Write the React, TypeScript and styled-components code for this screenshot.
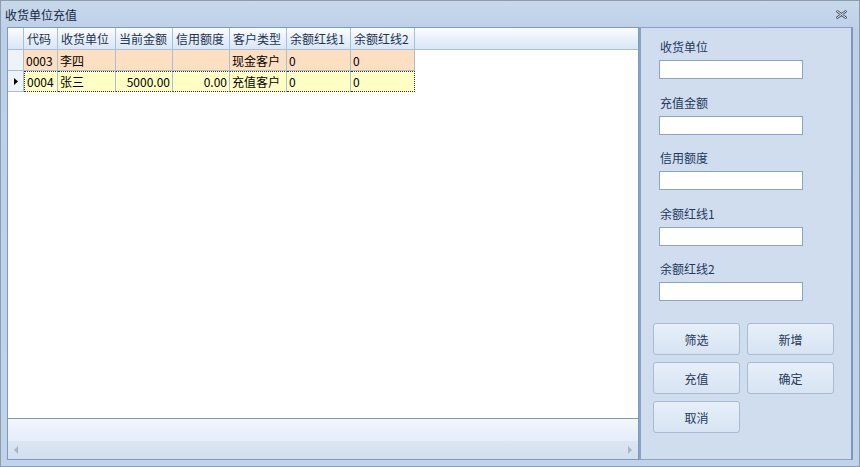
import React from "react";
import styled, { createGlobalStyle } from "styled-components";

const Global = createGlobalStyle`
  html, body { margin: 0; padding: 0; }
  body { font-family: "Noto Sans CJK SC", "Liberation Sans", sans-serif; font-size: 12px; }
`;

const Window = styled.div`
  width: 860px;
  height: 467px;
  box-sizing: border-box;
  border: 1px solid #8e9cb0;
  background: linear-gradient(#c9d9ec, #bcd0e8 30px, #c0d3ea);
  display: flex;
  flex-direction: column;
`;

const TitleBar = styled.div`
  height: 26px;
  display: flex;
  align-items: center;
  justify-content: space-between;
  padding: 0 12px 0 4px;
  color: #15283f;
  font-size: 12px;
`;

const Body = styled.div`
  flex: 1;
  display: flex;
  padding: 0 6px 6px 6px;
  min-height: 0;
`;

const GridBox = styled.div`
  width: 632px;
  box-sizing: border-box;
  border: 1px solid #7f98bb;
  background: #fff;
  display: flex;
  flex-direction: column;
`;

const Table = styled.div`
  flex: 1;
  display: grid;
  grid-template-columns: 16px 34px 58px 57px 57px 57px 64px 64px 1fr;
  grid-auto-rows: 21px;
  grid-template-rows: 22px;
  align-content: start;
`;

const HeadCell = styled.div<{ $last?: boolean }>`
  background: linear-gradient(#fbfdff, #e9f0fa 50%, #dae6f5);
  border-right: ${(p) => (p.$last ? "none" : "1px solid #a9bfd9")};
  border-bottom: 1px solid #a9bfd9;
  color: #1a3352;
  display: flex;
  align-items: center;
  padding-left: 3px;
  white-space: nowrap;
`;

const Cell = styled.div<{ $bg: string; $right?: boolean; $sel?: boolean; $first?: boolean; $end?: boolean }>`
  background: ${(p) => p.$bg};
  border-right: 1px solid #a9bfd9;
  border-bottom: 1px solid #a9bfd9;
  display: flex;
  align-items: center;
  justify-content: ${(p) => (p.$right ? "flex-end" : "flex-start")};
  padding: 0 2px;
  color: #000;
  white-space: nowrap;
  ${(p) => (p.$sel ? "border-top: 1px dotted #333; border-bottom: 1px dotted #333;" : "")}
  ${(p) => (p.$sel && p.$first ? "border-left: 1px dotted #333;" : "")}
  ${(p) => (p.$sel && p.$end ? "border-right: 1px dotted #333;" : "")}
`;

const Indicator = styled.div`
  background: #eef3fa;
  border-right: 1px solid #a9bfd9;
  border-bottom: 1px solid #a9bfd9;
  display: flex;
  align-items: center;
  justify-content: center;
`;

const Empty = styled.div``;

const Footer = styled.div`
  height: 22px;
  border-top: 1px solid #7f98bb;
  background: linear-gradient(#f1f6fd, #e4edf9);
`;

const ScrollBar = styled.div`
  height: 18px;
  background: linear-gradient(#dbe6f2, #d2dfee);
  display: flex;
  align-items: center;
  justify-content: space-between;
  padding: 0 6px;
`;

const Panel = styled.div`
  flex: 1;
  box-sizing: border-box;
  border: 1px solid #8aa2c4;
  border-right: 2px solid #7f97ba;
  border-left: 2px solid #8aa2c4;
  background: #d0ddef;
  padding: 12px 0 0 18px;
  display: flex;
  flex-direction: column;
`;

const Field = styled.div`
  display: flex;
  flex-direction: column;
  gap: 6px;
  margin-bottom: 16.5px;
`;

const Label = styled.div`
  color: #1e395b;
  padding-left: 1px;
  line-height: 14px;
`;

const Input = styled.div`
  width: 144px;
  height: 19px;
  box-sizing: border-box;
  background: #fff;
  border: 1px solid #8ea4c4;
`;

const Buttons = styled.div`
  display: grid;
  grid-template-columns: 87px 87px;
  grid-auto-rows: 32px;
  gap: 7px 7px;
  margin-top: 5.5px;
  margin-left: -6px;
`;

const Button = styled.div`
  box-sizing: border-box;
  border: 1px solid #a9bad2;
  border-radius: 3px;
  background: linear-gradient(#e6eff9, #d8e4f3);
  color: #1e395b;
  display: flex;
  align-items: center;
  justify-content: center;
`;

const headers = ["代码", "收货单位", "当前金额", "信用额度", "客户类型", "余额红线1", "余额红线2"];

const rows = [
  { bg: "#fddfc2", sel: false, vals: ["0003", "李四", "", "", "现金客户", "0", "0"] },
  { bg: "#ffffc4", sel: true, vals: ["0004", "张三", "5000.00", "0.00", "充值客户", "0", "0"] },
];

const fields = ["收货单位", "充值金额", "信用额度", "余额红线1", "余额红线2"];

export default function App() {
  return (
    <>
      <Global />
      <Window>
        <TitleBar>
          <span>收货单位充值</span>
          <svg width="11" height="9" viewBox="0 0 11 9">
            <path d="M1.5 1.5 L9.5 7.5 M9.5 1.5 L1.5 7.5" stroke="#3a4a60" strokeWidth="2.6" strokeLinecap="round" />
            <path d="M1.5 1.5 L9.5 7.5 M9.5 1.5 L1.5 7.5" stroke="#fff" strokeWidth="1" strokeLinecap="round" />
          </svg>
        </TitleBar>
        <Body>
          <GridBox>
            <Table>
              <HeadCell />
              {headers.map((h) => (
                <HeadCell key={h}>{h}</HeadCell>
              ))}
              <HeadCell $last />
              {rows.map((r, i) => (
                <React.Fragment key={i}>
                  <Indicator>
                    {r.sel && (
                      <svg width="4" height="7" viewBox="0 0 4 7">
                        <path d="M0 0 L4 3.5 L0 7 Z" fill="#000" />
                      </svg>
                    )}
                  </Indicator>
                  {r.vals.map((v, j) => (
                    <Cell
                      key={j}
                      $bg={r.bg}
                      $sel={r.sel}
                      $first={j === 0}
                      $end={j === r.vals.length - 1}
                      $right={j === 2 || j === 3}
                    >
                      {v}
                    </Cell>
                  ))}
                  <Empty />
                </React.Fragment>
              ))}
            </Table>
            <Footer />
            <ScrollBar>
              <svg width="4" height="8" viewBox="0 0 4 8">
                <path d="M4 0 L0 4 L4 8 Z" fill="#a8b6c8" />
              </svg>
              <svg width="4" height="8" viewBox="0 0 4 8">
                <path d="M0 0 L4 4 L0 8 Z" fill="#a8b6c8" />
              </svg>
            </ScrollBar>
          </GridBox>
          <Panel>
            {fields.map((f) => (
              <Field key={f}>
                <Label>{f}</Label>
                <Input />
              </Field>
            ))}
            <Buttons>
              <Button>筛选</Button>
              <Button>新增</Button>
              <Button>充值</Button>
              <Button>确定</Button>
              <Button>取消</Button>
            </Buttons>
          </Panel>
        </Body>
      </Window>
    </>
  );
}
